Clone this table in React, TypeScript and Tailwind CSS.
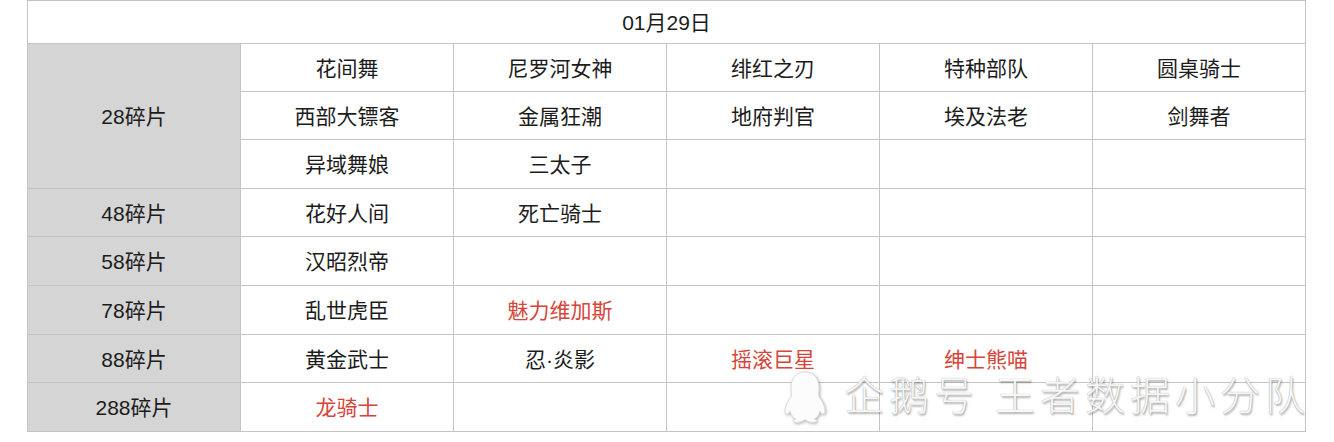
import React from "react";

const FONT = { fontFamily: '"Liberation Sans", "Noto Sans CJK SC", sans-serif' };

type Cell = { text: string; red?: boolean };

// 28碎片 spans three rows
const heroRows28: Cell[][] = [
  [{ text: "花间舞" }, { text: "尼罗河女神" }, { text: "绯红之刃" }, { text: "特种部队" }, { text: "圆桌骑士" }],
  [{ text: "西部大镖客" }, { text: "金属狂潮" }, { text: "地府判官" }, { text: "埃及法老" }, { text: "剑舞者" }],
  [{ text: "异域舞娘" }, { text: "三太子" }, { text: "" }, { text: "" }, { text: "" }],
];

const otherRows: { label: string; cells: Cell[] }[] = [
  { label: "48碎片", cells: [{ text: "花好人间" }, { text: "死亡骑士" }, { text: "" }, { text: "" }, { text: "" }] },
  { label: "58碎片", cells: [{ text: "汉昭烈帝" }, { text: "" }, { text: "" }, { text: "" }, { text: "" }] },
  { label: "78碎片", cells: [{ text: "乱世虎臣" }, { text: "魅力维加斯", red: true }, { text: "" }, { text: "" }, { text: "" }] },
  { label: "88碎片", cells: [{ text: "黄金武士" }, { text: "忍·炎影" }, { text: "摇滚巨星", red: true }, { text: "绅士熊喵", red: true }, { text: "" }] },
  { label: "288碎片", cells: [{ text: "龙骑士", red: true }, { text: "" }, { text: "" }, { text: "" }, { text: "" }] },
];

function Td({ cell }: { cell: Cell }) {
  return (
    <div
      className={`flex items-center justify-center pt-[2px] border-r border-b border-[#c4c4c4] text-[21px] ${
        cell.red ? "text-[#d6453a]" : "text-[#1c1c1c]"
      }`}
    >
      {cell.text}
    </div>
  );
}

function Label({ text, span }: { text: string; span?: boolean }) {
  return (
    <div
      className={`flex items-center justify-center pt-[2px] bg-[#d5d5d5] border-r border-b border-[#c4c4c4] text-[21px] text-[#1c1c1c] ${
        span ? "row-span-3" : ""
      }`}
    >
      {text}
    </div>
  );
}

function Penguin() {
  return (
    <svg width="50" height="54" viewBox="0 0 50 54" className="drop-shadow-[1px_1px_1.5px_rgba(0,0,0,0.3)]">
      <path
        d="M25 3 C15 3 11 11 11 19 C11 23 12 25 11 28 C8 32 5 37 5 42 C5 45 7 46 9 44 L10 42 C11 46 13 49 16 50 C13 51 12 52 14 53 C18 54 22 53 24 51 L26 51 C28 53 32 54 36 53 C38 52 37 51 34 50 C37 49 39 46 40 42 L41 44 C43 46 45 45 45 42 C45 37 42 32 39 28 C38 25 39 23 39 19 C39 11 35 3 25 3 Z"
        fill="#fcfcfc"
        stroke="#dcdcdc"
        strokeWidth="1"
      />
    </svg>
  );
}

export default function App() {
  return (
    <div className="relative w-[1334px] h-[442px] bg-white overflow-hidden" style={FONT}>
      <div className="pl-[27px]">
        <div className="grid w-[1279px] grid-cols-[213px_213px_213px_213px_213px_213px] grid-rows-[43px_48px_48px_49px_48px_49px_49px_48px_49px] border-l border-t border-[#c4c4c4]">
          <div className="col-span-6 flex items-center justify-center pt-[2px] border-r border-b border-[#c4c4c4] text-[21px] text-[#1c1c1c]">
            01月29日
          </div>

          <Label text="28碎片" span />
          {heroRows28.flat().map((c, i) => (
            <Td key={"h" + i} cell={c} />
          ))}

          {otherRows.map((r) => (
            <React.Fragment key={r.label}>
              <Label text={r.label} />
              {r.cells.map((c, i) => (
                <Td key={r.label + i} cell={c} />
              ))}
            </React.Fragment>
          ))}
        </div>
      </div>

      {/* watermark */}
      <div className="absolute left-[780px] top-[369px] flex items-center gap-[14px] pointer-events-none">
        <Penguin />
        <span className="text-[40px] font-light leading-none tracking-[5px] text-[#f7f7f7] [text-shadow:0_0_1px_#909090,1px_2px_2px_rgba(0,0,0,0.3)]">
          企鹅号 王者数据小分队
        </span>
      </div>
    </div>
  );
}
